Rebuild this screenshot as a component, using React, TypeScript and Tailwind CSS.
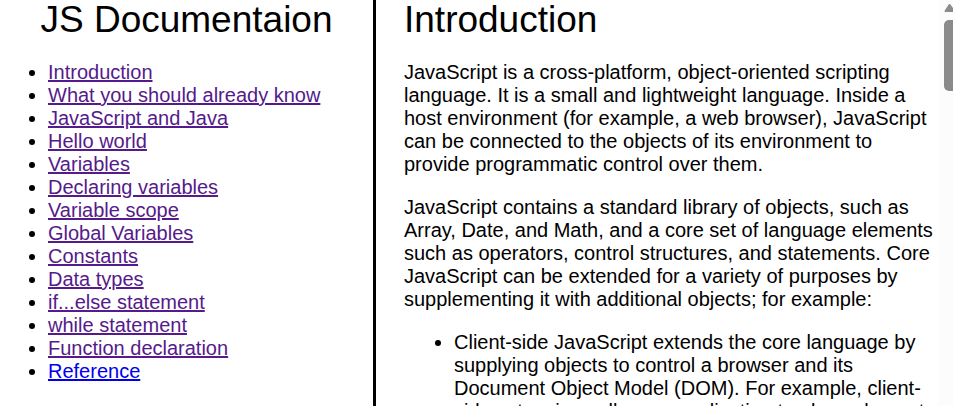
const links = [
  'Introduction',
  'What you should already know',
  'JavaScript and Java',
  'Hello world',
  'Variables',
  'Declaring variables',
  'Variable scope',
  'Global Variables',
  'Constants',
  'Data types',
  'if...else statement',
  'while statement',
  'Function declaration',
  'Reference',
];

export default function App() {
  return (
    <div className="flex h-screen overflow-hidden bg-white font-['Liberation_Sans',Arial,sans-serif] text-xl leading-[23px] text-black">
      <nav className="w-[376px] shrink-0 border-r-3 border-black" aria-label="Documentation">
        <h1 className="text-center text-[37px] leading-10">JS Documentaion</h1>
        <ul className="mt-[21px] list-disc pl-12">
          {links.map((name) => (
            <li key={name}>
              <a
                href={'#' + name.replaceAll(' ', '_')}
                className={
                  name === 'Reference'
                    ? 'text-[#0000ee] underline decoration-2'
                    : 'text-[#551a8b] underline decoration-2'
                }
              >
                {name}
              </a>
            </li>
          ))}
        </ul>
      </nav>
      <main className="min-w-0 flex-1 overflow-hidden pl-7">
        <h2 className="text-[37px] leading-10">Introduction</h2>
        <p className="mt-[21px]">
          JavaScript is a cross-platform, object-oriented scripting language. It is a small and lightweight language.
          Inside a host environment (for example, a web browser), JavaScript can be connected to the objects of its
          environment to provide programmatic control over them.
        </p>
        <p className="mt-5">
          JavaScript contains a standard library of objects, such as Array, Date, and Math, and a core set of language
          elements such as operators, control structures, and statements. Core JavaScript can be extended for a variety
          of purposes by supplementing it with additional objects; for example:
        </p>
        <ul className="mt-5 list-disc pl-[50px]">
          <li>
            Client-side JavaScript extends the core language by supplying objects to control a browser and its Document
            Object Model (DOM). For example, client-side extensions allow an application to place elements on an HTML
            form and respond to user events such as mouse clicks, form input, and page navigation.
          </li>
        </ul>
      </main>
      <div className="flex w-[15px] shrink-0 flex-col items-end bg-[#fcfcfc]" aria-hidden="true">
        <svg className="mt-1 h-2 w-[9px]" viewBox="0 0 9 8">
          <path d="M5 0 H6 L9 4 V8 H1 Q0 7 1 6 Z" fill="#8b8b8b" />
        </svg>
        <div className="mt-2 h-[71px] w-[9px] rounded-l-[5px] bg-[#8b8b8b]" />
      </div>
    </div>
  );
}
